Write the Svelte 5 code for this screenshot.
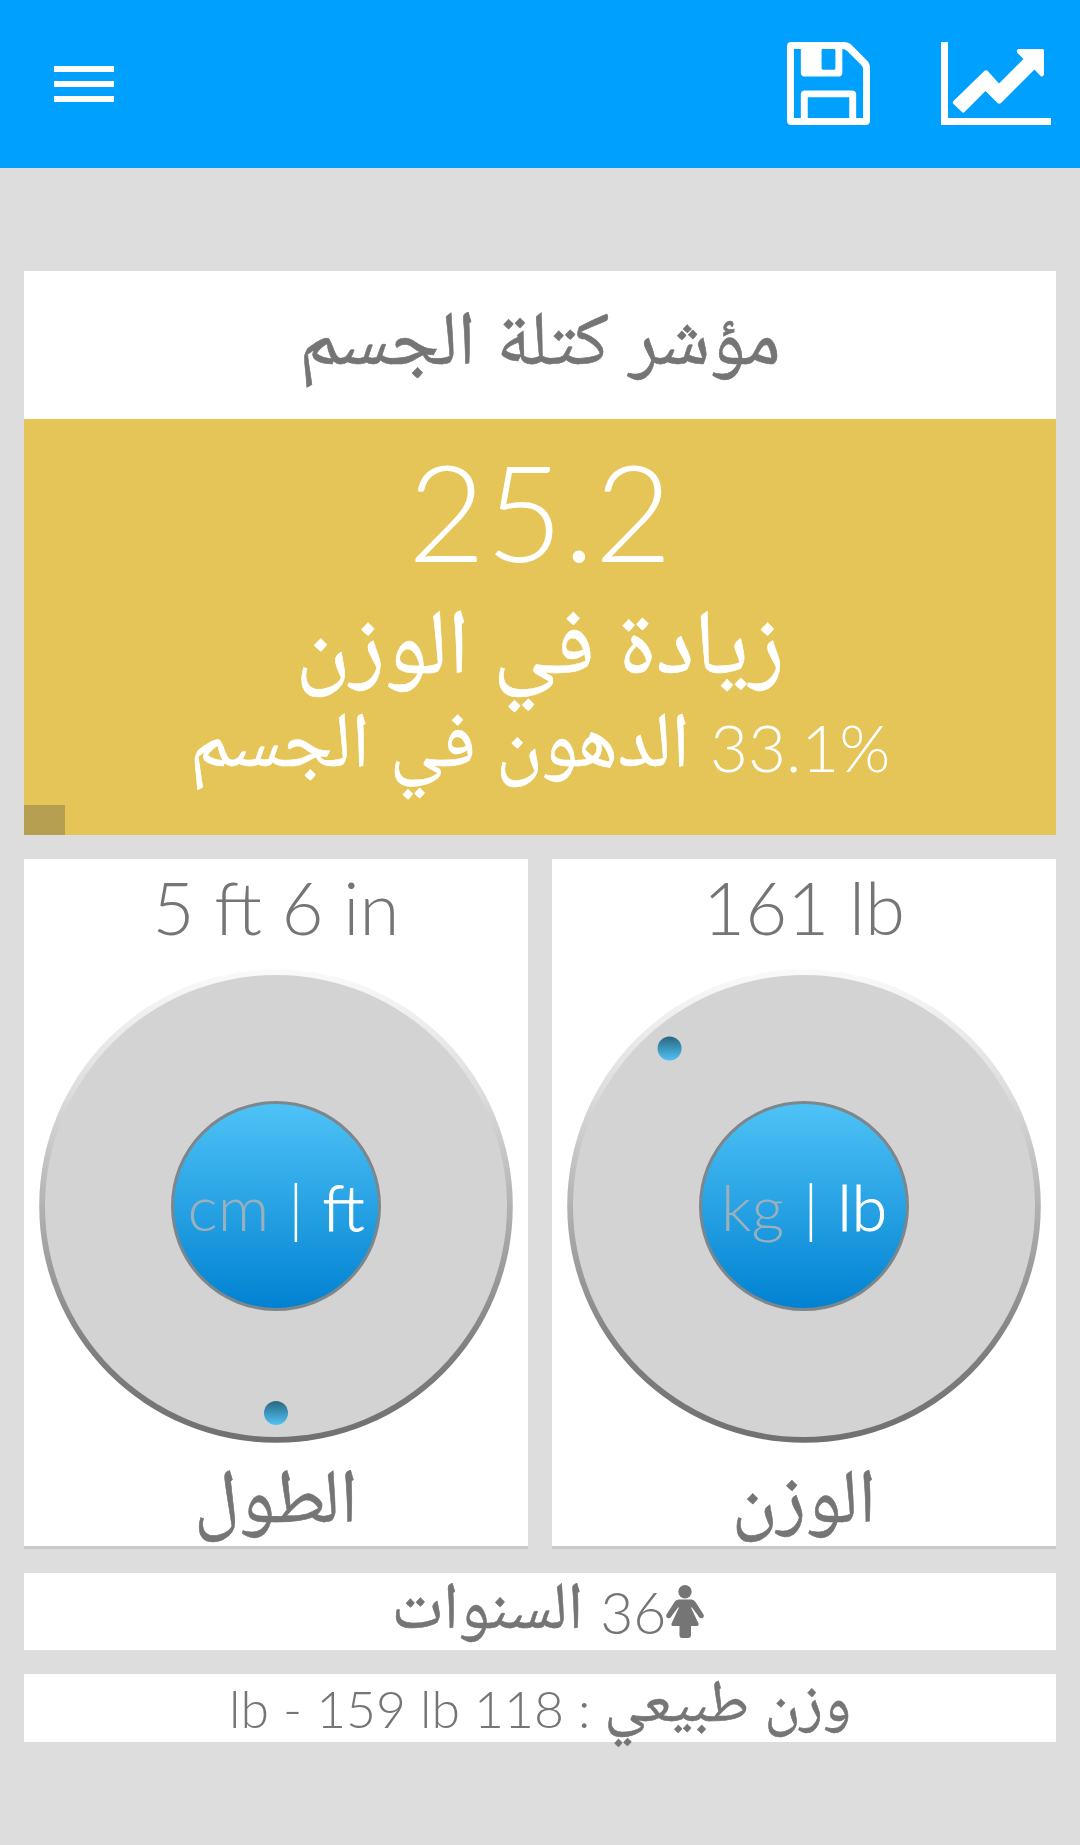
<script lang="ts">
  interface Dial {
    name: string;
    value: string;
    label: string;
    units: [string, string];
    /** Knob angle in degrees, clockwise from the top */
    angle: number;
  }

  const dials: Dial[] = [
    { name: 'height', value: '5 ft 6 in', label: 'الطول', units: ['cm', 'ft'], angle: 180 },
    { name: 'weight', value: '161 lb', label: 'الوزن', units: ['kg', 'lb'], angle: -40.5 },
  ];

  const bmi = 25.2;
  const bodyFat = 33.1;
  const age = 36;
</script>

<div class="app">
  <header>
    <button class="menu" aria-label="القائمة">
      <span></span>
      <span></span>
      <span></span>
    </button>
    <div class="actions">
      <button aria-label="حفظ">
        <svg width="83" height="83" viewBox="0 0 12 12">
          <path
            fill="#fff"
            fill-rule="evenodd"
            d="M.6 0H8.2Q8.9 0 9.3.4L11.6 2.7Q12 3.1 12 3.8V11.4Q12 12 11.4 12H.6Q0 12 0 11.4V.6Q0 0 .6 0ZM1 1V11H2V7.6Q2 7 2.6 7H9.4Q10 7 10 7.6V11H11V3.9Q11 3.6 10.7 3.3L8.7 1.3Q8.4 1 8 1V4.4Q8 5 7.4 5H2.6Q2 5 2 4.4V1ZM3 8V11H9V8ZM5.2 1Q5 1 5 1.2V3.8Q5 4 5.2 4H6.8Q7 4 7 3.8V1.2Q7 1 6.8 1Z"
          />
        </svg>
      </button>
      <button aria-label="الرسم البياني">
        <svg width="110" height="83" viewBox="0 0 110 83">
          <path
            fill="#fff"
            d="M0 0H7V76H110V83H0ZM12 61.5Q11.5 60 12.5 59L43.5 28.7Q45 27.7 46.5 28.7L58 41.5L82.5 17L76 10.5Q75.2 7.5 77.5 7H101.5Q103 7 103 8.5V32.5Q102 35.5 99.5 34L93.5 27.5L60 61Q58 62.5 56.5 61L44.5 49L24 69.5Q22.5 71.5 21 70Z"
          />
        </svg>
      </button>
    </div>
  </header>

  <main>
    <h1 dir="rtl"><span class="ar">مؤشر كتلة الجسم</span></h1>

    <section class="result">
      <div class="bmi">{bmi}</div>
      <div class="category" dir="rtl"><span class="ar">زيادة في الوزن</span></div>
      <div class="fat" dir="rtl">
        <span dir="ltr">{bodyFat}%</span>
        <span class="ar">الدهون في الجسم</span>
      </div>
      <div class="scale"></div>
    </section>

    <section class="dials">
      {#each dials as dial}
        <div class="card">
          <div class="value">{dial.value}</div>
          <div class="dial">
            <svg width="480" height="480" viewBox="-240 -240 480 480">
              <defs>
                <linearGradient id="rim-{dial.name}" x1="0" y1="0" x2="0" y2="1">
                  <stop offset="0" stop-color="#fafafa" />
                  <stop offset="0.25" stop-color="#dedede" />
                  <stop offset="0.5" stop-color="#b2b2b2" />
                  <stop offset="0.8" stop-color="#808080" />
                  <stop offset="1" stop-color="#707070" />
                </linearGradient>
                <linearGradient id="hub-{dial.name}" x1="0" y1="0" x2="0" y2="1">
                  <stop offset="0" stop-color="#4fc3f7" />
                  <stop offset="1" stop-color="#0081d1" />
                </linearGradient>
                <linearGradient id="knob-{dial.name}" x1="0" y1="0" x2="0" y2="1">
                  <stop offset="0" stop-color="#2a6680" />
                  <stop offset="1" stop-color="#4fc3f7" />
                </linearGradient>
              </defs>
              <circle r="236.8" fill="url(#rim-{dial.name})" />
              <circle r="231" fill="#d3d3d3" />
              <circle r="103.5" fill="url(#hub-{dial.name})" stroke="#7d868b" stroke-width="3" />
              <circle
                cx={207 * Math.sin((dial.angle * Math.PI) / 180)}
                cy={-207 * Math.cos((dial.angle * Math.PI) / 180)}
                r="12"
                fill="url(#knob-{dial.name})"
              />
            </svg>
            <div class="units">
              <span class="off">{dial.units[0]}</span>
              <span>|</span>
              <span class="on">{dial.units[1]}</span>
            </div>
          </div>
          <div class="label" dir="rtl"><span class="ar">{dial.label}</span></div>
        </div>
      {/each}
    </section>

    <section class="age" dir="rtl">
      <svg width="38" height="53" viewBox="0 0 38 53">
        <g fill="#757575">
          <circle cx="19" cy="6.7" r="6.7" />
          <path
            d="M12.5 14.5H25.5Q28 14.5 29.5 17L37.5 29.5Q38.5 32 36.5 33Q34.5 34 33 32L26 22.5H25L32.5 38.5Q33 41 31 41H25V50Q25 53 22 53H16Q13.5 53 13.5 50V41H7Q5 41 5.5 38.5L13 22.5H12L5 32Q3.5 34 1.5 33Q-.5 32 .5 29.5L8.5 17Q10 14.5 12.5 14.5Z"
          />
        </g>
      </svg>
      <span>{age}</span>
      <span class="ar">السنوات</span>
    </section>

    <section class="range" dir="rtl">
      <span class="ar">وزن طبيعي</span>
      <span>: 118 lb - 159 lb</span>
    </section>
  </main>
</div>

<style>
  :global(body) {
    background: #ddd;
  }

  .app {
    height: 1845px;
    overflow: hidden;
    background: #ddd;
    color: #757575;
    font-family: Lato, 'Noto Naskh Arabic UI', 'Noto Naskh Arabic', 'DejaVu Sans', sans-serif;
    font-weight: 300;
  }

  header {
    display: flex;
    justify-content: space-between;
    align-items: center;
    height: 168px;
    padding: 0 29px 0 54px;
    box-sizing: border-box;
    background: #00a0ff;
  }

  button {
    display: flex;
    padding: 0;
    border: 0;
    background: none;
  }

  .menu {
    flex-direction: column;
    gap: 9px;
  }

  .menu span {
    width: 60px;
    height: 6px;
    background: #fff;
  }

  .actions {
    display: flex;
    gap: 71px;
    padding-bottom: 1px;
  }

  main {
    display: flex;
    flex-direction: column;
    padding: 103px 24px 0;
  }

  h1 {
    display: flex;
    justify-content: center;
    height: 148px;
    margin: 0;
    background: #fff;
    font-size: 76.5px;
    line-height: 146px;
  }

  .ar {
    font-weight: 400;
    white-space: nowrap;
    -webkit-text-stroke: 0.6px currentColor;
  }

  .result {
    position: relative;
    display: flex;
    flex-direction: column;
    align-items: center;
    height: 416px;
    background: #e5c558;
    color: #fff;
  }

  .bmi {
    height: 170px;
    font-size: 134px;
    line-height: 184px;
  }

  .category {
    height: 109px;
    font-size: 92px;
    line-height: 122px;
  }

  .fat {
    display: flex;
    gap: 20px;
    height: 100px;
    font-size: 65.5px;
    line-height: 98px;
  }

  .fat .ar {
    font-size: 78px;
    line-height: 99px;
  }

  .scale {
    position: absolute;
    left: 0;
    bottom: 0;
    width: 41px;
    height: 30px;
    background: #b69f50;
  }

  .dials {
    display: grid;
    grid-template-columns: 1fr 1fr;
    gap: 24px;
    margin-top: 24px;
  }

  .card {
    display: flex;
    flex-direction: column;
    align-items: center;
    height: 687px;
    border-bottom: 3px solid #cacaca;
    background: #fff;
  }

  .value {
    height: 107px;
    font-size: 72.5px;
    line-height: 96px;
  }

  .dial {
    display: grid;
    place-items: center;
    height: 480px;
  }

  .dial > * {
    grid-area: 1 / 1;
  }

  .units {
    display: flex;
    gap: 19px;
    color: #fff;
    font-size: 64px;
  }

  .off {
    color: #9ab0ba;
  }

  .on {
    -webkit-text-stroke: 0.9px #fff;
  }

  .label {
    height: 100px;
    font-size: 76.5px;
    line-height: 112px;
  }

  .age {
    display: flex;
    justify-content: center;
    align-items: center;
    height: 77px;
    margin-top: 24px;
    padding-left: 16px;
    background: #fff;
    font-size: 57px;
  }

  .age .ar {
    margin-right: 17px;
    font-size: 66.5px;
    line-height: 77px;
  }

  .range {
    display: flex;
    justify-content: center;
    align-items: center;
    gap: 14px;
    height: 68px;
    margin-top: 24px;
    background: #fff;
    font-size: 51.7px;
  }

  .range .ar {
    padding-bottom: 4px;
    font-size: 60px;
    line-height: 68px;
  }
</style>
